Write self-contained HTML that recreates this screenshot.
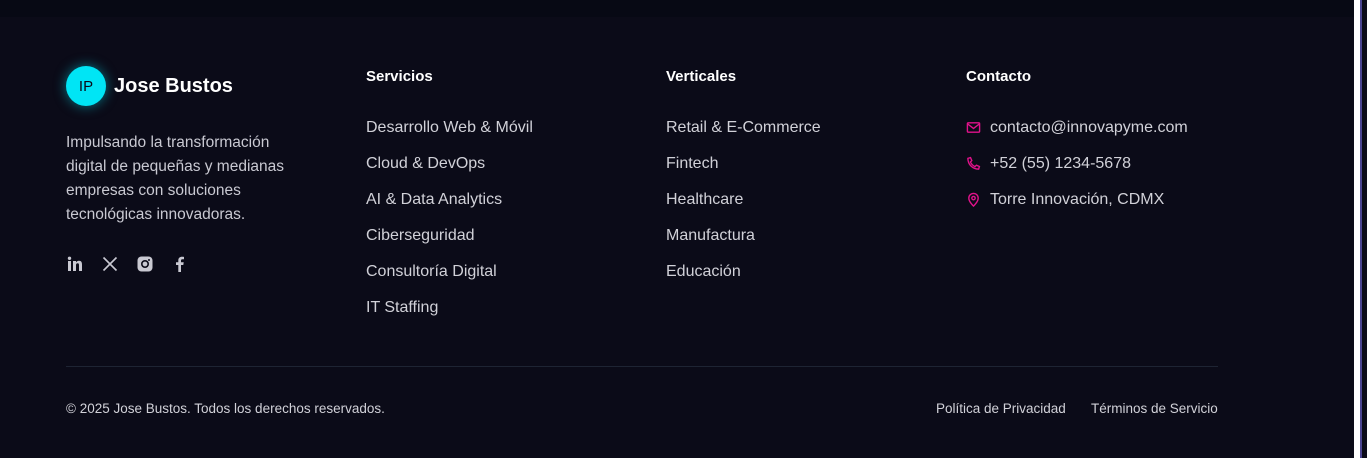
<!DOCTYPE html>
<html><head><meta charset="utf-8"><style>
*{margin:0;padding:0;box-sizing:border-box}
body{width:1367px;height:458px;background:#0b0b18;font-family:"Liberation Sans",sans-serif;color:#d1d1d8;position:relative;overflow:hidden}
.top{position:absolute;left:0;top:0;width:1354px;height:17px;background:#070914}
.sb{position:absolute;left:1354px;top:0;width:6px;height:458px;background:#fff}
.sb2{position:absolute;left:1360px;top:0;width:2px;height:458px;background:#4a4490}
.sb3{position:absolute;left:1362px;top:0;width:5px;height:458px;background:#0b0b18}
.logo{position:absolute;left:66px;top:66px;width:40px;height:40px;border-radius:50%;background:#00e5f5;box-shadow:0 0 12px rgba(0,229,245,.5);color:#0b0b18;font-size:15px;display:flex;align-items:center;justify-content:center}
.name{position:absolute;left:114px;top:75px;font-size:20px;font-weight:bold;color:#fff}
.desc{position:absolute;left:66px;top:131px;width:235px;font-size:15.5px;line-height:24px;color:#c9c9d2}
.soc{position:absolute;top:256px;width:16px;height:16px}
h4{position:absolute;top:68px;font-size:15px;color:#fff;font-weight:bold}
ul{position:absolute;top:118px;list-style:none;font-size:16px;color:#d1d1d8}
li{height:36px;line-height:19px}
.c li{display:flex;gap:9px;align-items:flex-start}
.c svg{margin-top:2px}
.hr{position:absolute;left:66px;top:366px;width:1152px;height:1px;background:#1e2433}
.f{position:absolute;top:401px;font-size:13.5px;color:#d1d1d8}
</style></head><body>
<div class="top"></div><div class="sb"></div><div class="sb2"></div><div class="sb3"></div>
<div class="logo">IP</div><div class="name">Jose Bustos</div>
<div class="desc">Impulsando la transformación digital de pequeñas y medianas empresas con soluciones tecnológicas innovadoras.</div>
<svg class="soc" style="left:67px" viewBox="0 0 16 16" fill="#c9c9d2"><rect x="1" y="5" width="3" height="10"/><circle cx="2.5" cy="2.3" r="1.7"/><path d="M6 5h3v1.5C9.6 5.5 10.6 4.8 12 4.8c2.3 0 3 1.5 3 3.8V15h-3V9.2c0-1.2-.3-2-1.4-2S9 8 9 9.2V15H6z"/></svg>
<svg class="soc" style="left:102px" viewBox="0 0 16 16" fill="none" stroke="#c9c9d2" stroke-width="1.6"><path d="M1.5 1.5l13 13M14.5 1.5l-13 13"/></svg>
<svg class="soc" style="left:137px" viewBox="0 0 16 16"><rect x="0.5" y="0.5" width="15" height="15" rx="4" fill="#c9c9d2"/><circle cx="8" cy="8" r="3.2" fill="none" stroke="#0b0b18" stroke-width="1.6"/><circle cx="12" cy="4" r="1" fill="#0b0b18"/></svg>
<svg class="soc" style="left:172px" viewBox="0 0 16 16" fill="#c9c9d2"><path d="M9 16V9h2.3l.4-2.7H9V4.6c0-.8.3-1.3 1.4-1.3H12V.9C11.6.8 10.8.7 10 .7 8 .7 6.3 1.9 6.3 4.2v2.1H4V9h2.3v7z"/></svg>
<h4 style="left:366px">Servicios</h4>
<ul style="left:366px"><li>Desarrollo Web &amp; Móvil</li><li>Cloud &amp; DevOps</li><li>AI &amp; Data Analytics</li><li>Ciberseguridad</li><li>Consultoría Digital</li><li>IT Staffing</li></ul>
<h4 style="left:666px">Verticales</h4>
<ul style="left:666px"><li>Retail &amp; E-Commerce</li><li>Fintech</li><li>Healthcare</li><li>Manufactura</li><li>Educación</li></ul>
<h4 style="left:966px">Contacto</h4>
<ul class="c" style="left:966px">
<li><svg width="15" height="15" viewBox="0 0 16 16" fill="none" stroke="#e0128a" stroke-width="1.5"><rect x="1.5" y="3" width="13" height="10" rx="1"/><path d="M1.5 4l6.5 5 6.5-5"/></svg>contacto@innovapyme.com</li>
<li><svg width="15" height="15" viewBox="0 0 16 16" fill="none" stroke="#e0128a" stroke-width="1.5"><path d="M2 2.5c0 6.5 5 11.5 11.5 11.5l.8-2.8-3.2-1.4-1.5 1.5C7.5 10.3 5.7 8.5 4.7 6.4l1.5-1.5L4.8 1.7z"/></svg>+52 (55) 1234-5678</li>
<li><svg width="15" height="15" viewBox="0 0 16 16" fill="none" stroke="#e0128a" stroke-width="1.5"><path d="M8 15s5-4.5 5-8.5A5 5 0 0 0 3 6.5C3 10.5 8 15 8 15z"/><circle cx="8" cy="6.5" r="1.8"/></svg>Torre Innovación, CDMX</li></ul>
<div class="hr"></div>
<div class="f" style="left:66px">© 2025 Jose Bustos. Todos los derechos reservados.</div>
<div class="f" style="left:936px">Política de Privacidad</div>
<div class="f" style="left:1091px">Términos de Servicio</div>
</body></html>
